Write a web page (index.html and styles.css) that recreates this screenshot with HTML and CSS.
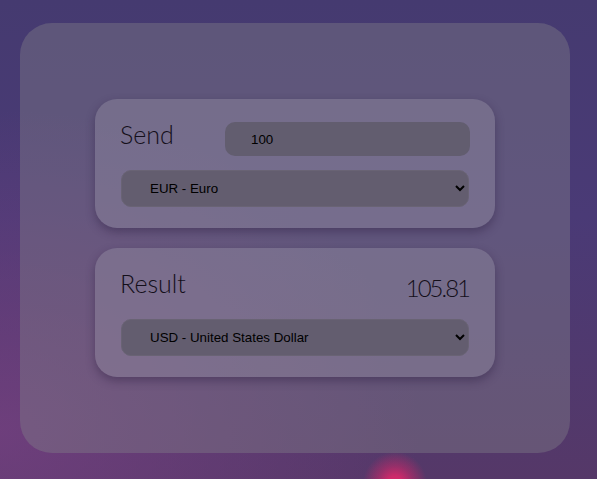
FILE: index.html
```html
<!DOCTYPE html>
<html lang="en">
<head>
<meta charset="utf-8">
<title>Currency Converter</title>
<link rel="stylesheet" href="styles.css">
</head>
<body>
<main class="panel">
  <section class="card">
    <div class="row">
      <span class="label">Send</span>
      <input class="amount" type="text" value="100">
    </div>
    <select class="currency">
      <option>EUR - Euro</option>
    </select>
  </section>
  <section class="card">
    <div class="row">
      <span class="label">Result</span>
      <span class="value">105.81</span>
    </div>
    <select class="currency">
      <option>USD - United States Dollar</option>
    </select>
  </section>
</main>
</body>
</html>
```
FILE: styles.css
```css
html, body {
  margin: 0;
  height: 100%;
}
body {
  font-family: "Lato", "Open Sans", sans-serif;
  background:
    radial-gradient(circle at 395px 484px, #d8296a 0, #cc2a6a 8px, rgba(200, 40, 105, 0.55) 18px, rgba(200, 40, 105, 0) 32px),
    radial-gradient(ellipse 420px 320px at 0 430px, rgba(116, 64, 128, 0.8), rgba(116, 64, 128, 0)),
    linear-gradient(180deg, #453a70 0%, #4a3a76 45%, #553868 100%);
  padding: 23px 27px 26px 20px;
  box-sizing: border-box;
  overflow: hidden;
}
.panel {
  height: 430px;
  width: 550px;
  border-radius: 32px;
  background: rgba(128, 126, 136, 0.42);
  display: flex;
  flex-direction: column;
  align-items: center;
  justify-content: center;
  gap: 20px;
}
.card {
  width: 400px;
  box-sizing: border-box;
  height: 129px;
  padding: 23px 25px 21px 25px;
  border-radius: 22px;
  background: rgba(150, 144, 166, 0.4);
  box-shadow: 0 4px 10px rgba(40, 25, 60, 0.4);
  display: flex;
  flex-direction: column;
  gap: 14px;
}
.row {
  display: flex;
  align-items: center;
  justify-content: space-between;
  height: 34px;
}
.label {
  font-size: 25px;
  font-weight: 300;
  color: #140f1a;
  margin-top: -11px;
}
.value {
  font-size: 24px;
  font-weight: 300;
  color: #140f1a;
  margin-top: -1px;
  margin-right: 1px;
  letter-spacing: -2px;
}
.amount {
  width: 245px;
  height: 34px;
  box-sizing: border-box;
  border: none;
  border-radius: 10px;
  background: #625d6f;
  padding: 0 26px;
  font-family: "Liberation Sans", Arial, sans-serif;
  font-size: 13.33px;
  color: #000;
  outline: none;
}
.currency {
  width: 348px;
  height: 37px;
  margin-left: 1px;
  border: 1px solid #696374;
  border-radius: 10px;
  background-color: #635d6f;
  padding: 0 20px 0 24px;
  font-family: "Liberation Sans", Arial, sans-serif;
  font-size: 13.33px;
  color: #000;
  outline: none;
}
```
